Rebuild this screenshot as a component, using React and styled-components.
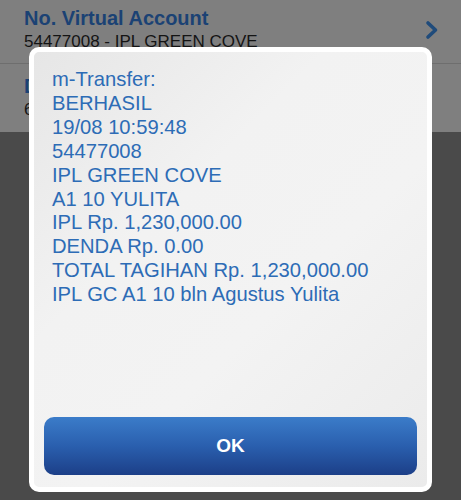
import React from "react";
import styled, { createGlobalStyle } from "styled-components";

const Global = createGlobalStyle`
  html, body { margin: 0; padding: 0; }
  body { font-family: "Liberation Sans", Arial, Helvetica, sans-serif; }
  #root { width: 461px; height: 500px; overflow: hidden; }
`;

const Screen = styled.div`
  position: relative;
  width: 461px;
  height: 500px;
  overflow: hidden;
  background: #4a4a4a;
`;

const List = styled.div`
  display: flex;
  flex-direction: column;
  margin-top: -4px;
  background: #7f7f7f;
`;

const Row = styled.div`
  display: flex;
  align-items: center;
  height: 68px;
  padding-left: 24px;
  padding-right: 24px;
  box-sizing: border-box;
  border-bottom: ${(p) => (p.$last ? "none" : "1px solid #6e6e6e")};
`;

const RowText = styled.div`
  flex: 1;
  display: flex;
  flex-direction: column;
  gap: 1px;
`;

const RowTitle = styled.div`
  font-weight: bold;
  font-size: 20px;
  line-height: 23px;
  color: #1b4274;
`;

const RowValue = styled.div`
  font-size: 17px;
  line-height: 22px;
  color: #141414;
`;

const Chevron = styled.svg`
  width: 14px;
  height: 20px;
  margin-right: -2px;
  flex: none;
`;

const Dialog = styled.div`
  position: absolute;
  left: 29px;
  top: 47px;
  width: 403px;
  height: 445px;
  box-sizing: border-box;
  border: 5px solid #ffffff;
  border-radius: 10px;
  background: linear-gradient(135deg, #e6e6e6 0%, #f2f2f2 35%, #f3f3f3 60%, #ebebeb 100%);
  display: flex;
  flex-direction: column;
  padding: 16px 10px 12px 10px;
`;

const Message = styled.div`
  flex: 1;
  padding-left: 8px;
  font-size: 20.2px;
  line-height: 23.9px;
  color: #2d6cb6;
`;

const Line = styled.div`
  white-space: nowrap;
`;

const OkButton = styled.button`
  height: 58px;
  width: 100%;
  border: none;
  border-radius: 10px;
  background: linear-gradient(to bottom, #3b7cc9 0%, #2a5fae 50%, #1c3f88 100%);
  color: #ffffff;
  font-family: "Liberation Sans", Arial, Helvetica, sans-serif;
  font-weight: bold;
  font-size: 19px;
  padding: 0;
  cursor: pointer;
`;

const lines = [
  "m-Transfer:",
  "BERHASIL",
  "19/08 10:59:48",
  "54477008",
  "IPL GREEN COVE",
  "A1 10 YULITA",
  "IPL Rp. 1,230,000.00",
  "DENDA Rp. 0.00",
  "TOTAL TAGIHAN Rp. 1,230,000.00",
  "IPL GC A1 10 bln Agustus Yulita",
];

export default function App() {
  return (
    <>
      <Global />
      <Screen>
        <List>
          <Row>
            <RowText>
              <RowTitle>No. Virtual Account</RowTitle>
              <RowValue>54477008 - IPL GREEN COVE</RowValue>
            </RowText>
            <Chevron viewBox="0 0 14 20">
              <path d="M3 3 L10.5 10 L3 17" fill="none" stroke="#1f4b7b" strokeWidth="3.6" strokeLinecap="round" strokeLinejoin="round" />
            </Chevron>
          </Row>
          <Row $last>
            <RowText>
              <RowTitle>D</RowTitle>
              <RowValue>6</RowValue>
            </RowText>
          </Row>
        </List>
        <Dialog>
          <Message>
            {lines.map((l) => (
              <Line key={l}>{l}</Line>
            ))}
          </Message>
          <OkButton>OK</OkButton>
        </Dialog>
      </Screen>
    </>
  );
}
